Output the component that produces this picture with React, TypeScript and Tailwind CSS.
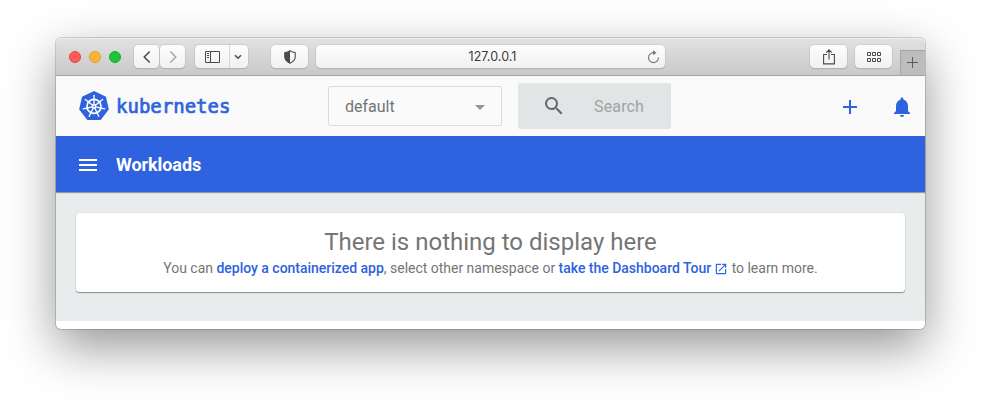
import React from "react";

const btn =
  "flex h-[23px] items-center justify-center rounded-[4.5px] bg-linear-to-b from-[#fdfdfd] to-[#f1f1f1] text-[#4a4a4a] shadow-[0_0_0_0.5px_#bdbdbd,0_1px_1px_rgba(0,0,0,0.2)]";

function Wheel() {
  const spokes = [0, 1, 2, 3, 4, 5, 6];
  return (
    <svg width="30" height="30" viewBox="0 0 30 30" className="block">
      <path
        d="M15 1.2 L26 6.4 L28.7 18.2 L21.2 27.9 L8.8 27.9 L1.3 18.2 L4 6.4 Z"
        fill="#2f62de"
        stroke="#2f62de"
        strokeWidth="2.2"
        strokeLinejoin="round"
      />
      <circle cx="15" cy="15.4" r="7" fill="none" stroke="#fff" strokeWidth="1.7" />
      {spokes.map((i) => (
        <path
          key={i}
          d="M15 13.6V4.4"
          stroke="#fff"
          strokeWidth="1.35"
          strokeLinecap="round"
          transform={`rotate(${(i * 360) / 7} 15 15.4)`}
        />
      ))}
      <circle cx="15" cy="15.4" r="2.3" fill="#fff" />
      <circle cx="15" cy="15.4" r="0.8" fill="#2f62de" />
    </svg>
  );
}

function Toolbar() {
  return (
    <div className="flex h-[38px] items-center rounded-t-[5px] border-b border-[#a3a3a3] bg-linear-to-b from-[#e2e2e2] to-[#c9c9c9] pl-[13px] shadow-[inset_0_1px_0_#efefef]">
      <div className="flex gap-2">
        <span className="size-3 rounded-full border border-[#e2463f] bg-[#fc5b57]" />
        <span className="size-3 rounded-full border border-[#dfa023] bg-[#fdb434]" />
        <span className="size-3 rounded-full border border-[#12ac28] bg-[#1ec337]" />
      </div>
      <div className="ml-[13px] flex gap-px">
        <div className={`${btn} w-[25px]`}>
          <svg width="12" height="14" viewBox="0 0 12 14" fill="none" stroke="currentColor" strokeWidth="1.5">
            <path d="M8.7 1.5 3.2 7l5.5 5.5" />
          </svg>
        </div>
        <div className={`${btn} w-[25px]`}>
          <svg width="12" height="14" viewBox="0 0 12 14" fill="none" stroke="#a5a5a5" strokeWidth="1.4">
            <path d="M3.3 1.5 8.8 7l-5.5 5.5" />
          </svg>
        </div>
      </div>
      <div className={`${btn} ml-[10px] w-[53px]`}>
        <div className="flex w-[34px] justify-center">
          <svg width="15" height="12" viewBox="0 0 15 12" fill="none" stroke="currentColor">
            <path d="M.5.5h14v11H.5zM5.5.5v11M2 2.5h2M2 4.5h2M2 6.5h2" />
          </svg>
        </div>
        <div className="flex h-full flex-1 items-center justify-center border-l border-[#d5d5d5] pr-[3px]">
          <svg width="8" height="6" viewBox="0 0 8 6" fill="none" stroke="currentColor" strokeWidth="1.5">
            <path d="m1 1.3 3 3 3-3" />
          </svg>
        </div>
      </div>
      <div className={`${btn} ml-[23px] w-[37px]`}>
        <svg width="12" height="14" viewBox="0 0 12 14">
          <path d="M6 .7c1.5 1.2 3 1.7 5.2 1.8v4.6C11.2 10 9 12 6 13.2 3 12 .8 10 .8 7.1V2.5C3 2.4 4.5 1.9 6 .7Z" fill="none" stroke="currentColor" strokeWidth="1.1" />
          <path d="M6 .7C4.5 1.9 3 2.4.8 2.5v4.6C.8 10 3 12 6 13.2Z" fill="currentColor" />
        </svg>
      </div>
      <div className={`${btn} ml-[8px] w-[349px] font-['Inter',sans-serif] text-[12.5px]`}>
        <span className="flex-1 pt-px pl-[22px] text-center tracking-[0.05px] text-[#3c3c3c]">127.0.0.1</span>
        <svg width="13" height="14" viewBox="0 0 13 14" className="mr-[5px]" fill="none" stroke="#777" strokeWidth="1.1">
          <path d="M6.5 2.6A5 5 0 1 0 11.5 7.6" />
          <path d="M6 .2 9.6 2.7 6 5.2Z" fill="#777" stroke="none" />
        </svg>
      </div>
      <div className={`${btn} ml-[145px] w-[37px]`}>
        <svg width="12" height="16" viewBox="0 0 12 16" fill="none" stroke="currentColor" strokeWidth="1.1">
          <path d="M4 5.5H.6v9.4h10.8V5.5H8M6 10.5V1M3.2 3.7 6 .9l2.8 2.8" />
        </svg>
      </div>
      <div className={`${btn} ml-[8px] w-[37px]`}>
        <svg width="14" height="10" viewBox="0 0 14 10" fill="none" stroke="currentColor">
          <path d="M.5.5h3v3h-3zM5.5.5h3v3h-3zM10.5.5h3v3h-3zM.5 6.5h3v3h-3zM5.5 6.5h3v3h-3zM10.5 6.5h3v3h-3z" />
        </svg>
      </div>
      <div className="ml-auto flex h-[25px] w-[25px] items-center justify-center self-end border-t border-l border-[#a5a5a5] bg-[#bdbdbd] pr-[2px] pb-px">
        <svg width="11" height="11" viewBox="0 0 11 11" stroke="#5c5c5c">
          <path d="M5.5 0v11M0 5.5h11" />
        </svg>
      </div>
    </div>
  );
}

export default function App() {
  return (
    <div className="h-[403px] w-[981px] overflow-hidden bg-white px-14 pt-[38px] font-['Roboto',sans-serif]">
      <div className="flex h-[291px] w-[869px] flex-col rounded-[5px] bg-white shadow-[0_0_0_1px_rgba(0,0,0,0.16),0_18px_50px_rgba(0,0,0,0.42)]">
        <Toolbar />
        <header className="flex h-[60px] items-center bg-[#fafafa] pl-[23px]">
          <Wheel />
          <div className="ml-[7px] w-[115px] pt-px font-['DejaVu_Sans_Mono',monospace] text-[19px] leading-none text-[#2f62de] [-webkit-text-stroke:0.7px_#2f62de]">
            kubernetes
          </div>
          <div className="ml-[97px] flex h-[40px] w-[174px] items-center justify-between rounded-[2px] border border-[#dcdcdc] pr-4 pl-4 text-[16px] text-[#757575]">
            <span className="pt-[2px]">default</span>
            <svg width="10" height="5" viewBox="0 0 10 5" className="mt-[2px]">
              <path d="M0 0h10L5 5Z" fill="#949494" />
            </svg>
          </div>
          <div className="ml-4 flex h-[46px] w-[153px] items-center rounded-[2px] bg-[#e1e5e6] pl-[24px] text-[16px] text-[#a0a2a3]">
            <svg width="24" height="24" viewBox="0 0 24 24" fill="#646768">
              <path d="M15.5 14h-.79l-.28-.27A6.471 6.471 0 0 0 16 9.5 6.5 6.5 0 1 0 9.5 16c1.61 0 3.09-.59 4.23-1.57l.27.28v.79l5 4.99L20.49 19l-4.99-5zm-6 0C7.01 14 5 11.99 5 9.5S7.01 5 9.5 5 14 7.01 14 9.5 11.99 14 9.5 14z" />
            </svg>
            <span className="ml-[28px] pt-[2px] tracking-[0.15px]">Search</span>
          </div>
          <svg width="24" height="24" viewBox="0 0 24 24" fill="#2f62de" className="mt-[2px] ml-[167px]">
            <path d="M19 13h-6v6h-2v-6H5v-2h6V5h2v6h6v2z" />
          </svg>
          <svg width="24" height="24" viewBox="0 0 24 24" fill="#2f62de" className="mt-[2px] ml-[28px]">
            <path d="M12 22c1.1 0 2-.9 2-2h-4c0 1.1.89 2 2 2zm6-6v-5c0-3.07-1.64-5.64-4.5-6.32V4c0-.83-.67-1.5-1.5-1.5s-1.5.67-1.5 1.5v.68C7.63 5.36 6 7.92 6 11v5l-2 2v1h16v-1l-2-2z" />
          </svg>
        </header>
        <div className="relative flex h-[56px] items-center bg-[#2f62de] pl-5 text-white shadow-[0_1px_1px_rgba(0,0,0,0.35)]">
          <svg width="24" height="24" viewBox="0 0 24 24" fill="currentColor" className="mt-[2px]">
            <path d="M3 18h18v-2H3v2zm0-5h18v-2H3v2zm0-7v2h18V6H3z" />
          </svg>
          <h1 className="ml-4 text-[18px] font-bold tracking-[-0.07px]">Workloads</h1>
        </div>
        <main className="h-[129px] bg-[#e8eced] px-5 pt-[21px]">
          <section className="flex h-[79px] flex-col items-center rounded-[3px] bg-white pt-[13px] text-[#757575] shadow-[0_1px_1px_rgba(0,0,0,0.4),0_0_1px_rgba(0,0,0,0.3)]">
            <h2 className="text-[24px] leading-[32px]">There is nothing to display here</h2>
            <p className="flex items-center text-[14px] leading-5 tracking-[-0.015px] whitespace-pre">
              <span>You can </span>
              <a className="font-medium text-[#2f62de]">deploy a containerized app</a>
              <span>, select other namespace or </span>
              <a className="flex items-center font-medium text-[#2f62de]">
                take the Dashboard Tour
                <svg width="14" height="14" viewBox="0 0 24 24" fill="currentColor" className="mt-px ml-[3px]">
                  <path d="M19 19H5V5h7V3H5c-1.11 0-2 .9-2 2v14c0 1.1.89 2 2 2h14c1.1 0 2-.9 2-2v-7h-2v7zM14 3v2h3.59l-9.83 9.83 1.41 1.41L19 6.41V10h2V3h-7z" />
                </svg>
              </a>
              <span> to learn more.</span>
            </p>
          </section>
        </main>
      </div>
    </div>
  );
}
